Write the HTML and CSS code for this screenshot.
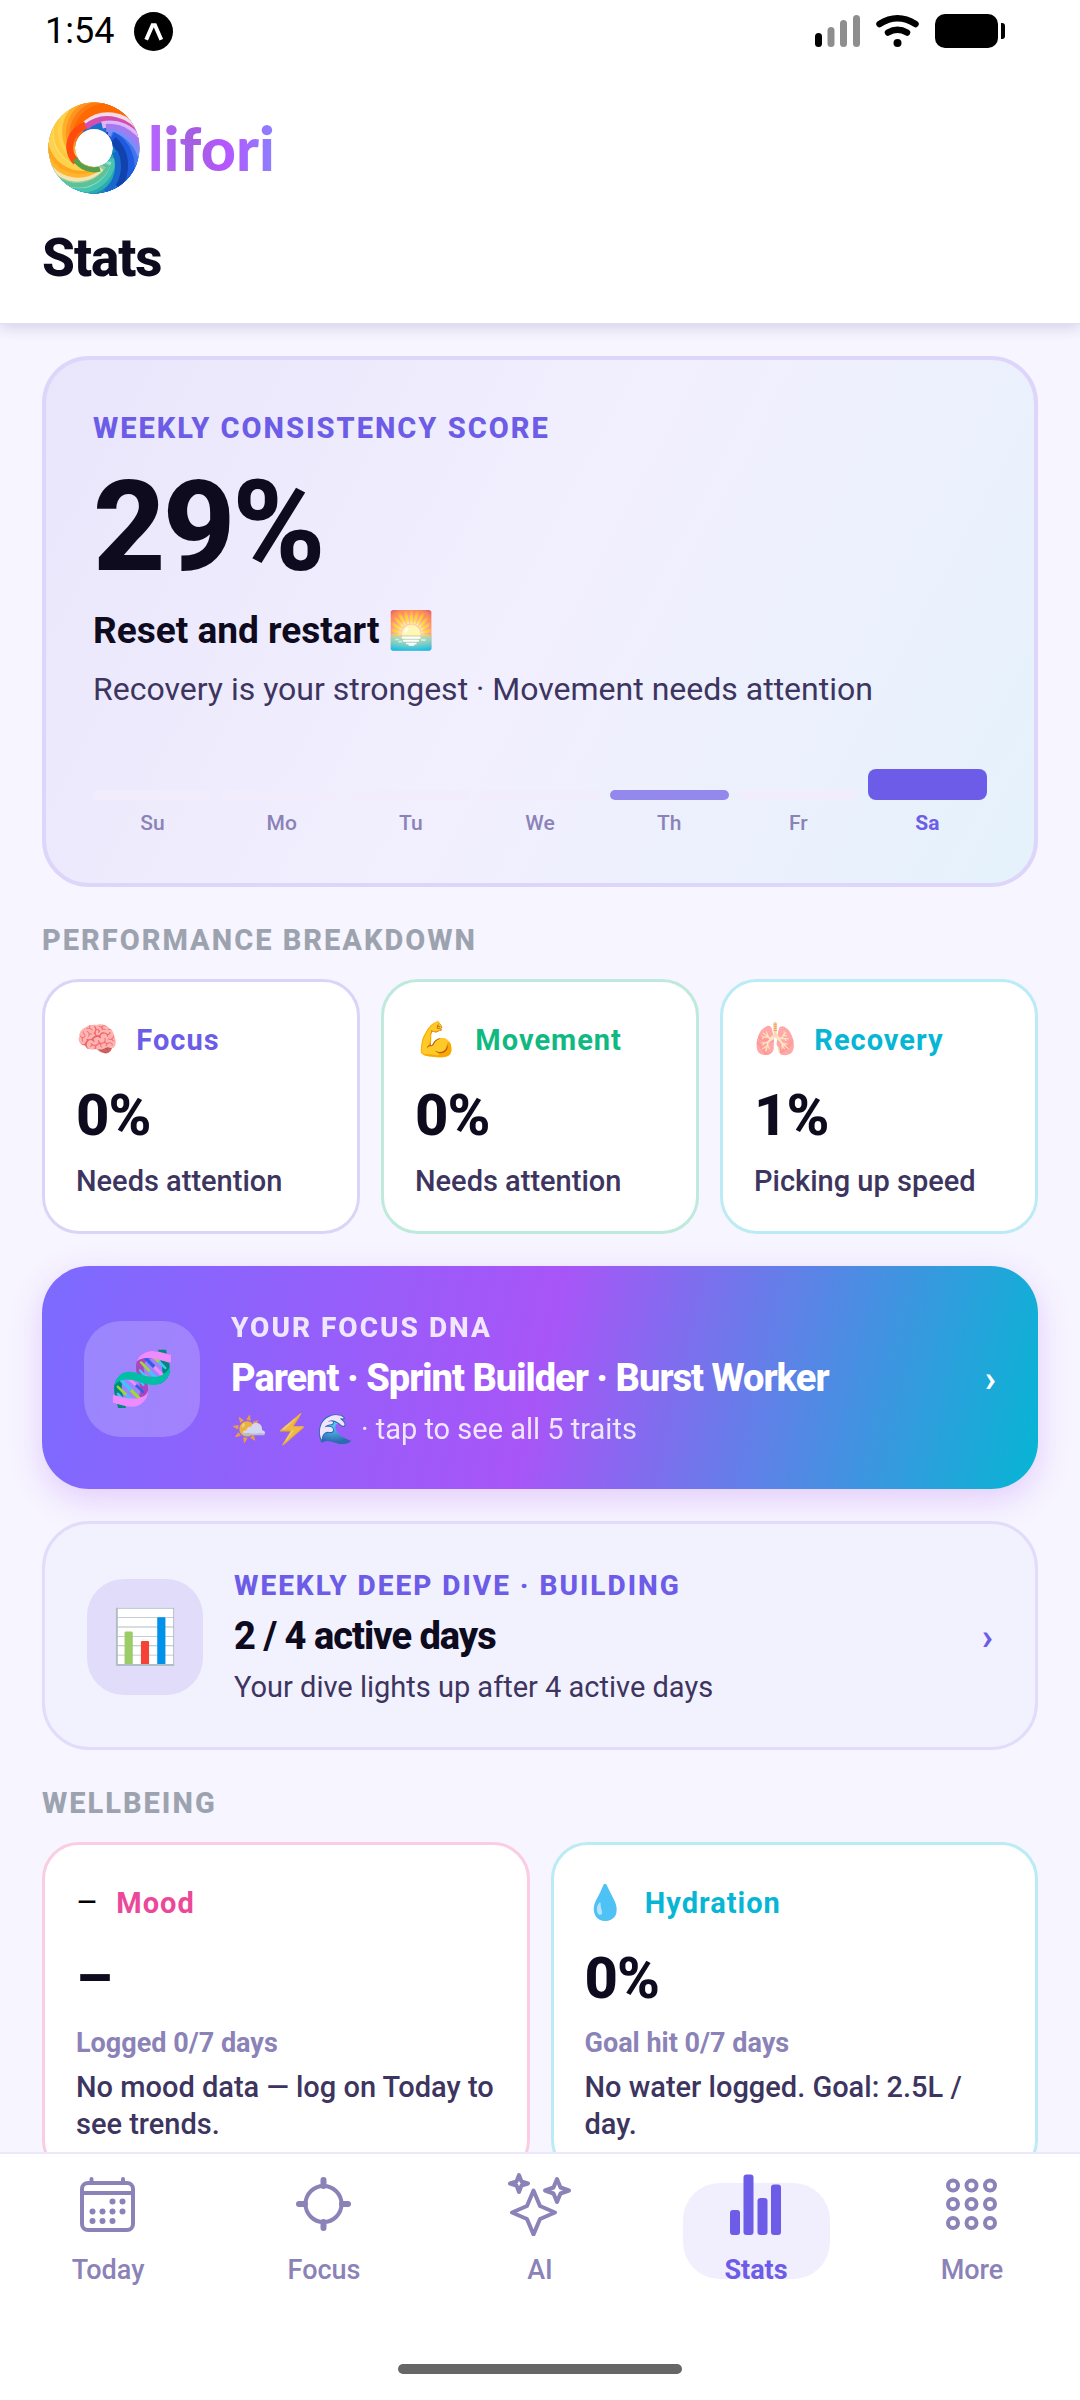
FILE: index.html
```html
<!DOCTYPE html>
<html lang="en">

<head>
    <meta charset="UTF-8">
    <meta name="viewport" content="width=device-width, initial-scale=1.0">
    <title>Lifori - Stats</title>
    <link rel="stylesheet" href="styles.css">
</head>

<body>
    <header class="header">
        <div class="status-bar">
            <div class="status-left">
                <span class="clock">1:54</span>
                <svg class="app-badge" viewBox="0 0 40 40">
                    <circle cx="20" cy="20" r="20" />
                    <path d="M12.500 28.500L19 13.500h2.500L28 28.500" fill="none" stroke="#fff" stroke-width="4" />
                </svg>
            </div>
            <svg class="status-icons" viewBox="0 0 192 34">
                <rect x="0" y="19" width="7" height="14" rx="3.500" />
                <g fill="#8e8e8e">
                    <rect x="12.500" y="13" width="7" height="20" rx="3.500" />
                    <rect x="25" y="6" width="7" height="27" rx="3.500" />
                    <rect x="38" y="1" width="7" height="32" rx="3.500" />
                </g>
                <g fill="none" stroke="#000" stroke-width="6.500" stroke-linecap="round">
                    <path d="M64.500 10Q82.500 -1.500 100.500 10" />
                    <path d="M73 18.500Q82.500 13 92 18.500" />
                </g>
                <circle cx="82.500" cy="29" r="4" />
                <rect x="120" y="0" width="63" height="34" rx="10" />
                <path d="M186 9h1a3 3 0 0 1 3 3v10a3 3 0 0 1-3 3h-1z" />
            </svg>
        </div>

        <div class="logo">
            <svg class="logo-ring" viewBox="-46 -46 92 92">
                <defs>
                    <path id="strand" d="M46 2A30 30 0 0 0 -10 -17" />
                    <clipPath id="ring">
                        <path clip-rule="evenodd" d="M0-45.500A45.500 45.500 0 1 1 0 45.500A45.500 45.500 0 1 1 0-45.500ZM0-19A19 19 0 1 0 0 19A19 19 0 1 0 0-19Z" />
                    </clipPath>
                </defs>
                <g clip-path="url(#ring)" fill="none" stroke-width="10">
                    <circle r="32" stroke="#1a6fd0" stroke-width="30" />
                    <use href="#strand" transform="rotate(70)" stroke="#1242ae" />
                    <use href="#strand" transform="rotate(84)" stroke="#1668cc" />
                    <use href="#strand" transform="rotate(98)" stroke="#1450b8" />
                    <use href="#strand" transform="rotate(112)" stroke="#1779cf" />
                    <use href="#strand" transform="rotate(126)" stroke="#148bb5" />
                    <use href="#strand" transform="rotate(140)" stroke="#2aa9b0" />
                    <use href="#strand" transform="rotate(152)" stroke="#45c4b0" />
                    <use href="#strand" transform="rotate(163)" stroke="#8fe0cc" stroke-width="6" />
                    <use href="#strand" transform="rotate(173)" stroke="#5dc29a" />
                    <use href="#strand" transform="rotate(184)" stroke="#8ccf9a" stroke-width="7" />
                    <use href="#strand" transform="rotate(194)" stroke="#f5e3b0" />
                    <use href="#strand" transform="rotate(208)" stroke="#ffb52e" />
                    <use href="#strand" transform="rotate(222)" stroke="#ffa51f" />
                    <use href="#strand" transform="rotate(236)" stroke="#ffd24d" />
                    <use href="#strand" transform="rotate(248)" stroke="#ffe17a" stroke-width="5" />
                    <use href="#strand" transform="rotate(260)" stroke="#ffc93c" />
                    <use href="#strand" transform="rotate(275)" stroke="#ffd24d" />
                    <use href="#strand" transform="rotate(290)" stroke="#ffb02a" />
                    <use href="#strand" transform="rotate(304)" stroke="#ff9420" />
                    <use href="#strand" transform="rotate(318)" stroke="#ff7a10" />
                    <use href="#strand" transform="rotate(332)" stroke="#ff6a00" />
                    <path d="M-18 14A22 22 0 0 1 -6-23" stroke="#ff4a10" stroke-width="7" />
                    <path d="M42-18A34 34 0 0 0 -8-24" stroke="#f6d9ea" stroke-width="7" />
                    <path d="M45-8A34 34 0 0 0 -8-21" stroke="#d24fb0" stroke-width="6" />
                    <path d="M46-6A34 34 0 0 0 8-23" stroke="#dcb8fa" stroke-width="7" />
                    <path d="M47 3A34 34 0 0 0 12-20" stroke="#a57af0" stroke-width="8" />
                    <path d="M45 12A34 34 0 0 0 14-16" stroke="#7f8cf8" stroke-width="8" />
                    <path d="M41 22A34 34 0 0 0 17-12" stroke="#3f78ee" stroke-width="9" />
                    <path d="M34 30A34 34 0 0 0 18-12" stroke="#1f5be0" stroke-width="9" />
                    <path d="M23 38A34 34 0 0 0 19-8" stroke="#1242ae" stroke-width="8" />
                    <path d="M12 44A34 34 0 0 0 21 4" stroke="#1668cc" stroke-width="6" />
                    <path d="M-19 11A22 22 0 0 0 6 21" stroke="#57a04a" stroke-width="5" />
                </g>
            </svg>
            <span class="logo-text">lifori</span>
        </div>

        <h1>Stats</h1>
    </header>

    <main class="content">
        <section class="hero">
            <h2 class="eyebrow">WEEKLY CONSISTENCY SCORE</h2>
            <div class="hero-score">29%</div>
            <div class="hero-title">Reset and restart 🌅</div>
            <p class="hero-text">Recovery is your strongest · Movement needs attention</p>
            <div class="chart">
                <div class="day"><div class="bar"></div><span>Su</span></div>
                <div class="day"><div class="bar"></div><span>Mo</span></div>
                <div class="day"><div class="bar"></div><span>Tu</span></div>
                <div class="day"><div class="bar"></div><span>We</span></div>
                <div class="day"><div class="bar filled"></div><span>Th</span></div>
                <div class="day"><div class="bar"></div><span>Fr</span></div>
                <div class="day today"><div class="bar" style="height: 31px"></div><span>Sa</span></div>
            </div>
        </section>

        <h2 class="section-title">PERFORMANCE BREAKDOWN</h2>
        <div class="cards">
            <section class="card focus">
                <h3><span class="emoji">🧠</span>Focus</h3>
                <div class="value">0%</div>
                <p class="note">Needs attention</p>
            </section>
            <section class="card movement">
                <h3><span class="emoji">💪</span>Movement</h3>
                <div class="value">0%</div>
                <p class="note">Needs attention</p>
            </section>
            <section class="card recovery">
                <h3><span class="emoji">🫁</span>Recovery</h3>
                <div class="value">1%</div>
                <p class="note">Picking up speed</p>
            </section>
        </div>

        <a class="banner dna" href="#dna">
            <span class="banner-icon">🧬</span>
            <span class="banner-body">
                <span class="eyebrow">YOUR FOCUS DNA</span>
                <span class="banner-title">Parent · Sprint Builder · Burst Worker</span>
                <span class="banner-text">🌤️ ⚡ 🌊 · tap to see all 5 traits</span>
            </span>
            <span class="chevron">›</span>
        </a>

        <a class="banner dive" href="#dive">
            <span class="banner-icon">📊</span>
            <span class="banner-body">
                <span class="eyebrow">WEEKLY DEEP DIVE · BUILDING</span>
                <span class="banner-title">2 / 4 active days</span>
                <span class="banner-text">Your dive lights up after 4 active days</span>
            </span>
            <span class="chevron">›</span>
        </a>

        <h2 class="section-title">WELLBEING</h2>
        <div class="cards">
            <section class="card mood">
                <h3><span class="emoji">–</span>Mood</h3>
                <div class="value">–</div>
                <p class="meta">Logged 0/7 days</p>
                <p class="note">No mood data — log on Today to see trends.</p>
            </section>
            <section class="card hydration">
                <h3><span class="emoji">💧</span>Hydration</h3>
                <div class="value">0%</div>
                <p class="meta">Goal hit 0/7 days</p>
                <p class="note">No water logged. Goal: 2.5L / day.</p>
            </section>
        </div>
    </main>

    <footer class="bottom">
        <nav class="tabs">
            <a class="tab" href="#today">
                <svg viewBox="0 0 64 64" fill="none" stroke="currentColor" stroke-width="4">
                    <rect x="6" y="11" width="51" height="47" rx="6" />
                    <path d="M6 21h51" />
                    <path d="M15.500 7v4M47 7v4" stroke-linecap="round" />
                    <g fill="currentColor" stroke="none">
                        <circle cx="36.500" cy="29.500" r="3" />
                        <circle cx="46.500" cy="29.500" r="3" />
                        <circle cx="16.500" cy="39.500" r="3" />
                        <circle cx="26.500" cy="39.500" r="3" />
                        <circle cx="36.500" cy="39.500" r="3" />
                        <circle cx="46.500" cy="39.500" r="3" />
                        <circle cx="16.500" cy="49" r="3" />
                        <circle cx="26.500" cy="49" r="3" />
                        <circle cx="36.500" cy="49" r="3" />
                    </g>
                </svg>
                <span>Today</span>
            </a>
            <a class="tab" href="#focus">
                <svg viewBox="0 0 64 64" fill="none" stroke="currentColor">
                    <circle cx="31.500" cy="32" r="18" stroke-width="4" />
                    <path d="M31.500 8v6M31.500 50v6M7 32h6M50 32h6" stroke-width="6" stroke-linecap="round" />
                </svg>
                <span>Focus</span>
            </a>
            <a class="tab" href="#ai">
                <svg viewBox="0 0 64 64" fill="none" stroke="currentColor" stroke-width="4" stroke-linejoin="round">
                    <path d="M25.500 18.500l6.500 15.500 15 6.500-15 6.500-6.500 15.500-6.500-15.500-15-6.500 15-6.500z" />
                    <path d="M11 3l2.500 6.500 6.500 2-6.500 2L11 20l-2.500-6.500-6.500-2 6.500-2z" />
                    <path d="M49 7l3.500 8.500 8.500 3-8.500 3L49 30l-3.500-8.500-8.500-3 8.500-3z" />
                </svg>
                <span>AI</span>
            </a>
            <a class="tab active" href="#stats">
                <svg viewBox="0 0 64 64" fill="currentColor">
                    <rect x="6" y="38" width="10" height="25" rx="3" />
                    <rect x="19.500" y="2.500" width="10" height="60.500" rx="3" />
                    <rect x="33.500" y="26" width="10" height="37" rx="3" />
                    <rect x="47" y="12.500" width="10" height="50.500" rx="3" />
                </svg>
                <span>Stats</span>
            </a>
            <a class="tab" href="#more">
                <svg viewBox="0 0 64 64" fill="none" stroke="currentColor" stroke-width="4">
                    <circle cx="13" cy="13.500" r="5" />
                    <circle cx="31.500" cy="13.500" r="5" />
                    <circle cx="50" cy="13.500" r="5" />
                    <circle cx="13" cy="32" r="5" />
                    <circle cx="31.500" cy="32" r="5" />
                    <circle cx="50" cy="32" r="5" />
                    <circle cx="13" cy="51" r="5" />
                    <circle cx="31.500" cy="51" r="5" />
                    <circle cx="50" cy="51" r="5" />
                </svg>
                <span>More</span>
            </a>
        </nav>
        <div class="home-bar"></div>
    </footer>
</body>

</html>
```

FILE: styles.css
```css
:root {
    --primary: #6c5ce7;
    --page-bg: #f7f5ff;
    --text: #0e0b1e;
    --text-soft: #3d3560;
    --text-muted: #8b82b8;
    --section: #9ca3af;
    --movement: #10b981;
    --recovery: #06b6d4;
    --mood: #ec4899;
}

* {
    box-sizing: border-box;
    margin: 0;
    padding: 0;
}

body {
    display: flex;
    flex-direction: column;
    height: 100vh;
    font-family: Roboto, "Noto Color Emoji", sans-serif;
    color: var(--text);
    background-color: var(--page-bg);
}

a {
    color: inherit;
    text-decoration: none;
}

/* Header */
.header {
    position: relative;
    z-index: 1;
    padding: 10px 42px 31px;
    background-color: #fff;
    border-bottom: 1px solid #e4e0f4;
    box-shadow: 0 3px 14px rgba(60, 50, 120, 0.2);
}

.status-bar {
    display: flex;
    align-items: center;
    justify-content: space-between;
    height: 42px;
    padding: 0 31px 0 3px;
    color: #000;
}

.status-left {
    display: flex;
    align-items: center;
    gap: 20px;
}

.clock {
    font-size: 36px;
    line-height: 42px;
}

.app-badge {
    width: 39px;
    height: 39px;
}

.status-icons {
    width: 192px;
    height: 34px;
}

.logo {
    display: flex;
    align-items: center;
    gap: 8px;
    margin: 50px 0 30px 6px;
}

.logo-ring {
    width: 92px;
    height: 92px;
}

.logo-text {
    font-family: Lato, sans-serif;
    font-size: 61px;
    font-weight: 900;
    line-height: 92px;
    color: transparent;
    background: linear-gradient(90deg, #b765ff, #a35ee0 35%, #b655ff 60%, #8b80ff);
    background-clip: text;
    -webkit-background-clip: text;
}

h1 {
    font-size: 53px;
    font-weight: 800;
    line-height: 68px;
    letter-spacing: -1px;
}

/* Scrolling content */
.content {
    flex: 1;
    min-height: 0;
    padding: 32px 42px;
    overflow-y: auto;
    scrollbar-width: none;
}

.eyebrow {
    font-size: 29px;
    font-weight: 800;
    line-height: 34px;
    letter-spacing: 2px;
    color: var(--primary);
}

.hero {
    padding: 51px 47px 47px;
    background: linear-gradient(118deg, #e9e6fc, #f2effe 50%, #e5f2fb);
    border: 4px solid #ddd6fa;
    border-radius: 47px;
}

.hero-score {
    margin-top: 19px;
    font-size: 126px;
    font-weight: 800;
    line-height: 126px;
    letter-spacing: -3px;
}

.hero-title {
    margin-top: 19px;
    font-size: 37px;
    font-weight: 700;
    line-height: 44px;
}

.hero-text {
    margin-top: 17px;
    font-size: 32px;
    line-height: 38px;
    color: var(--text-soft);
}

.chart {
    display: flex;
    gap: 10px;
    margin-top: 24px;
}

.day {
    flex: 1;
    display: flex;
    flex-direction: column;
    justify-content: flex-end;
    gap: 10px;
    height: 104px;
    text-align: center;
    font-size: 21px;
    font-weight: 500;
    line-height: 26px;
    color: var(--text-muted);
}

.bar {
    height: 10px;
    border-radius: 8px;
    background-color: #f1edfd;
}

.bar.filled {
    background-color: #9389ed;
}

.today {
    font-weight: 700;
    color: var(--primary);
}

.today .bar {
    background-color: var(--primary);
}

.section-title {
    margin: 36px 0 22px;
    font-size: 29px;
    font-weight: 800;
    line-height: 34px;
    letter-spacing: 2px;
    color: var(--section);
}

/* Cards */
.cards {
    display: flex;
    gap: 21px;
}

.card {
    flex: 1;
    padding: 34px 31px 31px;
    background-color: #fff;
    border: 3px solid #dad4f9;
    border-radius: 37px;
}

.card h3 {
    display: flex;
    align-items: center;
    gap: 17px;
    height: 47px;
    font-size: 29px;
    font-weight: 700;
    letter-spacing: 1px;
    color: var(--primary);
}

.emoji {
    font-size: 34px;
    font-weight: 400;
    line-height: 47px;
    color: #000;
}

.movement {
    border-color: #bdeadb;
}

.movement h3 {
    color: var(--movement);
}

.recovery,
.hydration {
    border-color: #bbebf4;
}

.recovery h3,
.hydration h3 {
    color: var(--recovery);
}

.mood {
    border-color: #fbcde3;
}

.mood h3 {
    color: var(--mood);
}

.value {
    margin-top: 18px;
    font-size: 58px;
    font-weight: 800;
    line-height: 68px;
    letter-spacing: -1px;
}

.meta {
    margin: 15px 0 -4px;
    font-size: 27px;
    font-weight: 700;
    line-height: 32px;
    color: var(--text-muted);
}

.note {
    margin-top: 14px;
    font-size: 29px;
    font-weight: 500;
    line-height: 37px;
    color: var(--text-soft);
}

/* Wide link cards */
.banner {
    display: flex;
    align-items: center;
    gap: 31px;
    margin-top: 32px;
    padding: 45px 42px 42px;
    border-radius: 47px;
}

.banner-icon {
    width: 116px;
    height: 116px;
    border-radius: 37px;
    font-size: 53px;
    line-height: 116px;
    text-align: center;
}

.banner-body {
    flex: 1;
    display: flex;
    flex-direction: column;
    gap: 11px;
}

.banner .eyebrow {
    font-size: 28px;
}

.banner-title {
    font-size: 38px;
    font-weight: 800;
    line-height: 44px;
    letter-spacing: -1px;
}

.banner-text {
    font-size: 29px;
    line-height: 36px;
}

.chevron {
    font-size: 37px;
    font-weight: 700;
    line-height: 44px;
}

.dna {
    color: #fff;
    background: linear-gradient(103deg, #7c6bff, #a855f7 50%, #06b6d4);
    box-shadow: 0 10px 32px rgba(168, 85, 247, 0.25);
}

.dna .banner-icon {
    background-color: rgba(255, 255, 255, 0.2);
}

.dna .eyebrow,
.dna .banner-text {
    color: #fff;
    opacity: 0.85;
}

.dive {
    position: relative;
    background-color: #f2f1fe;
    border: 3px solid #e1dcfa;
}

.dive .banner-icon {
    background-color: #e0dcfa;
}

.dive .banner-text {
    color: var(--text-soft);
}

.dive .chevron {
    color: var(--primary);
}

/* Tab bar */
.bottom {
    padding: 18px 0 26px;
    background-color: #fff;
    border-top: 2px solid #ece8fb;
}

.tabs {
    display: flex;
}

.tab {
    position: relative;
    flex: 1;
    display: flex;
    flex-direction: column;
    align-items: center;
    gap: 18px;
    font-size: 27px;
    font-weight: 500;
    line-height: 32px;
    color: var(--text-muted);
}

.tab svg {
    width: 64px;
    height: 64px;
}

.tab.active {
    z-index: 0;
    font-weight: 700;
    color: var(--primary);
}

.tab.active::before {
    content: "";
    position: absolute;
    z-index: -1;
    top: 11px;
    width: 147px;
    height: 96px;
    border-radius: 37px;
    background-color: #f1effd;
}

.home-bar {
    width: 284px;
    height: 10px;
    margin: 78px auto 0;
    border-radius: 5px;
    background-color: #666;
}
```
